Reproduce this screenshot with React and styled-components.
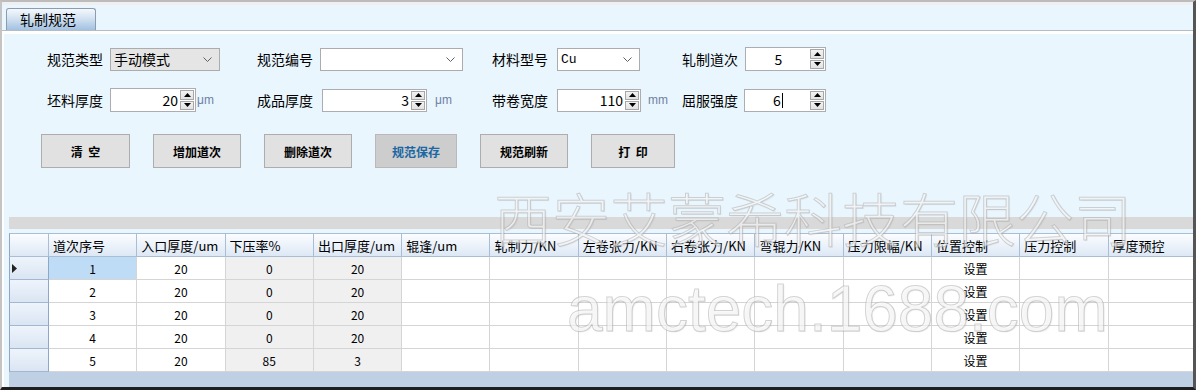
import React from "react";
import styled, { createGlobalStyle } from "styled-components";

const Global = createGlobalStyle`
  html, body { margin: 0; padding: 0; background: #ffffff; }
  body { font-family: "Noto Sans CJK SC", "Noto Sans", sans-serif; }
`;

const Window = styled.div`
  position: relative;
  width: 1196px;
  height: 390px;
  box-sizing: border-box;
  border-top: 2px solid #bcbcbc;
  border-left: 2px solid #c4c4c4;
  border-right: 3px solid #555555;
  border-bottom: 3px solid #1e1e1e;
  background: #eaf6fd;
  display: flex;
  flex-direction: column;
  overflow: hidden;
  font-family: "Noto Sans CJK SC", "Noto Sans", sans-serif;
  color: #000;
`;

const TabStrip = styled.div`
  flex: none;
  height: 29px;
  box-sizing: border-box;
  padding: 6px 0 0 4px;
  background: linear-gradient(#efefef 0 3px, #eaf6fd 3px);
  border-bottom: 1px solid #b5bcc5;
  display: flex;
  align-items: flex-end;
`;

const Tab = styled.div`
  width: 90px;
  height: 22px;
  box-sizing: border-box;
  border: 1px solid #8c9cae;
  border-bottom: none;
  border-radius: 3px 3px 0 0;
  background: linear-gradient(#f4f8fc, #d3e2f1 45%, #a2c1e1);
  font-size: 14px;
  line-height: 20px;
  padding-left: 13px;
`;

const TabPage = styled.div`
  flex: 1;
  display: flex;
  flex-direction: column;
  border-top: 3px solid #ffffff;
  border-left: 2px solid #ffffff;
  background: #eaf6fe;
  min-height: 0;
`;

const FormPanel = styled.div`
  flex: none;
  height: 183px;
  box-sizing: border-box;
  padding: 13px 0 0 37px;
  display: flex;
  flex-direction: column;
`;

const FieldRow = styled.div`
  display: grid;
  grid-template-columns: 210px 235px 190px 200px;
  height: 24px;
  margin-left: 6px;
  margin-top: ${(p) => p.$mt || 0}px;
  align-items: center;
`;

const Field = styled.div`
  display: flex;
  align-items: center;
  height: 100%;
`;

const Label = styled.span`
  font-size: 14px;
  white-space: nowrap;
  margin-right: ${(p) => p.$gap}px;
`;

const Combo = styled.div`
  width: ${(p) => p.$w}px;
  height: 23px;
  box-sizing: border-box;
  border: 1px solid #acacac;
  background: ${(p) => (p.$readonly ? "#e5e5e5" : "#ffffff")};
  display: flex;
  align-items: center;
  justify-content: space-between;
  padding: 0 7px 0 3px;
  font-size: 14px;
`;

const ComboText = styled.span`
  font-family: ${(p) =>
    p.$mono ? '"Liberation Mono", monospace' : '"Noto Sans CJK SC", sans-serif'};
  font-size: ${(p) => (p.$mono ? 13 : 14)}px;
`;

const Spin = styled.div`
  width: ${(p) => p.$w}px;
  height: ${(p) => p.$h || 24}px;
  box-sizing: border-box;
  border: 1px solid #abadb3;
  background: #ffffff;
  display: flex;
  padding: 1px;
`;

const SpinValue = styled.div`
  flex: 1;
  display: flex;
  align-items: center;
  justify-content: ${(p) => (p.$center ? "center" : "flex-end")};
  padding-right: ${(p) => (p.$center ? 0 : 2)}px;
  font-size: 14px;
`;

const Caret = styled.span`
  display: inline-block;
  width: 1px;
  height: 15px;
  background: #000;
  margin-left: 1px;
`;

const SpinButtons = styled.div`
  width: 14px;
  display: flex;
  flex-direction: column;
  gap: 1px;
`;

const SpinBtn = styled.div`
  flex: 1;
  box-sizing: border-box;
  border: 1px solid #a7a7a7;
  background: linear-gradient(#f3f3f3, #e2e2e2);
  display: flex;
  align-items: center;
  justify-content: center;
`;

const Unit = styled.span`
  font-family: "Liberation Sans", Arial, sans-serif;
  font-size: 12px;
  color: #6f80a4;
  margin-left: ${(p) => p.$gap}px;
`;

const ButtonRow = styled.div`
  display: flex;
  gap: 23px;
  margin-top: 22px;
`;

const Button = styled.div`
  width: ${(p) => p.$w}px;
  height: 34px;
  box-sizing: border-box;
  border: 1px solid ${(p) => (p.$active ? "#b9b9b9" : "#adadad")};
  background: ${(p) => (p.$active ? "#cdcdcd" : "#e1e1e1")};
  color: ${(p) => (p.$active ? "#1a67a3" : "#000000")};
  font-size: 12px;
  font-weight: 700;
  display: flex;
  align-items: center;
  justify-content: center;
  white-space: pre;
`;

const GridArea = styled.div`
  flex: 1;
  margin-left: 5px;
  display: flex;
  flex-direction: column;
  min-height: 0;
`;

const Band = styled.div`
  flex: none;
  height: 12px;
  background: #d9d9d9;
  margin-bottom: 4px;
`;

const GridViewport = styled.div`
  flex: 1;
  background: #bfd0e5;
  overflow: hidden;
`;

const Grid = styled.div`
  display: grid;
  grid-template-columns: 40px repeat(13, 88.3px);
  width: max-content;
`;

const HeadCell = styled.div`
  height: 24px;
  box-sizing: border-box;
  border-top: 1px solid #a9bdd5;
  border-bottom: 1px solid #a9bdd5;
  border-right: 1px solid #a9bdd5;
  border-left: ${(p) => (p.$corner ? "1px solid #8ea7c8" : "none")};
  background: linear-gradient(#fbfdff, #dde8f5);
  font-size: 13px;
  padding-left: 4px;
  display: flex;
  align-items: center;
  white-space: nowrap;
  overflow: hidden;
`;

const RowHead = styled.div`
  height: 23px;
  box-sizing: border-box;
  border-left: 1px solid #8ea7c8;
  border-right: 1px solid #8ea7c8;
  border-bottom: 1px solid #a3b7d2;
  background: linear-gradient(#eef4fb, #dae5f3);
  display: flex;
  align-items: center;
  padding-left: 2px;
`;

const Cell = styled.div`
  height: 23px;
  box-sizing: border-box;
  border-right: 1px solid #d5d5d5;
  border-bottom: 1px solid #d5d5d5;
  background: ${(p) => p.$bg};
  font-size: 12px;
  display: flex;
  align-items: center;
  justify-content: center;
`;

const Watermark = styled.div`
  position: absolute;
  left: ${(p) => p.$x}px;
  top: ${(p) => p.$y}px;
  font-family: ${(p) => p.$font};
  font-size: ${(p) => p.$size}px;
  font-weight: ${(p) => p.$weight};
  line-height: 1;
  white-space: nowrap;
  color: rgba(252, 252, 252, 0.6);
  -webkit-text-stroke: 1px rgba(160, 160, 160, 0.45);
  text-shadow: 1px 1px 1px rgba(140, 140, 140, 0.15);
  pointer-events: none;
`;

const Chevron = () => (
  <svg width="9" height="5" viewBox="0 0 9 5">
    <polyline points="0.5,0.5 4.5,4.5 8.5,0.5" fill="none" stroke="#606060" strokeWidth="1" />
  </svg>
);

const Arrow = ({ up }) => (
  <svg width="7" height="4" viewBox="0 0 7 4">
    <polygon points={up ? "3.5,0 7,4 0,4" : "0,0 7,0 3.5,4"} fill="#000" />
  </svg>
);

const RowMarker = () => (
  <svg width="5" height="9" viewBox="0 0 5 9">
    <polygon points="0,0 5,4.5 0,9" fill="#222" />
  </svg>
);

const SpinBox = ({ w, h, value, center, caret }) => (
  <Spin $w={w} $h={h}>
    <SpinValue $center={center}>
      {value}
      {caret && <Caret />}
    </SpinValue>
    <SpinButtons>
      <SpinBtn>
        <Arrow up />
      </SpinBtn>
      <SpinBtn>
        <Arrow />
      </SpinBtn>
    </SpinButtons>
  </Spin>
);

const columns = [
  "道次序号",
  "入口厚度/um",
  "下压率%",
  "出口厚度/um",
  "辊逢/um",
  "轧制力/KN",
  "左卷张力/KN",
  "右卷张力/KN",
  "弯辊力/KN",
  "压力限幅/KN",
  "位置控制",
  "压力控制",
  "厚度预控",
];

const rows = [
  [1, 20, 0, 20],
  [2, 20, 0, 20],
  [3, 20, 0, 20],
  [4, 20, 0, 20],
  [5, 20, 85, 3],
];

const buttons = [
  { t: "清  空", w: 89 },
  { t: "增加道次", w: 88 },
  { t: "删除道次", w: 88 },
  { t: "规范保存", w: 82, active: true },
  { t: "规范刷新", w: 88 },
  { t: "打  印", w: 84 },
];

export default function App() {
  return (
    <>
      <Global />
      <Window>
        <TabStrip>
          <Tab>轧制规范</Tab>
        </TabStrip>
        <TabPage>
          <FormPanel>
            <FieldRow>
              <Field>
                <Label $gap={7}>规范类型</Label>
                <Combo $w={110} $readonly>
                  <ComboText>手动模式</ComboText>
                  <Chevron />
                </Combo>
              </Field>
              <Field>
                <Label $gap={7}>规范编号</Label>
                <Combo $w={143}>
                  <ComboText />
                  <Chevron />
                </Combo>
              </Field>
              <Field>
                <Label $gap={9}>材料型号</Label>
                <Combo $w={83}>
                  <ComboText $mono>Cu</ComboText>
                  <Chevron />
                </Combo>
              </Field>
              <Field>
                <Label $gap={7}>轧制道次</Label>
                <SpinBox w={81} value="5" center />
              </Field>
            </FieldRow>
            <FieldRow $mt={17}>
              <Field>
                <Label $gap={7}>坯料厚度</Label>
                <SpinBox w={86} value="20" />
                <Unit $gap={1}>μm</Unit>
              </Field>
              <Field>
                <Label $gap={9}>成品厚度</Label>
                <SpinBox w={105} h={23} value="3" />
                <Unit $gap={8}>μm</Unit>
              </Field>
              <Field>
                <Label $gap={9}>带卷宽度</Label>
                <SpinBox w={84} h={23} value="110" />
                <Unit $gap={7}>mm</Unit>
              </Field>
              <Field>
                <Label $gap={6}>屈服强度</Label>
                <SpinBox w={82} h={23} value="6" center caret />
              </Field>
            </FieldRow>
            <ButtonRow>
              {buttons.map((b) => (
                <Button key={b.t} $w={b.w} $active={b.active}>
                  {b.t}
                </Button>
              ))}
            </ButtonRow>
          </FormPanel>
          <GridArea>
            <Band />
            <GridViewport>
              <Grid>
                <HeadCell $corner />
                {columns.map((c) => (
                  <HeadCell key={c}>{c}</HeadCell>
                ))}
                {rows.map((r, ri) => (
                  <React.Fragment key={ri}>
                    <RowHead>{ri === 0 && <RowMarker />}</RowHead>
                    {columns.map((c, ci) => {
                      let bg = "#ffffff";
                      if (ci === 2 || ci === 3) bg = "#f0f0f0";
                      if (ri === 0 && ci === 0) bg = "#bfdcf7";
                      let txt = "";
                      if (ci < 4) txt = r[ci];
                      if (ci === 10) txt = "设置";
                      return (
                        <Cell key={c} $bg={bg}>
                          {txt}
                        </Cell>
                      );
                    })}
                  </React.Fragment>
                ))}
              </Grid>
            </GridViewport>
          </GridArea>
        </TabPage>
        <Watermark
          $x={492}
          $y={186}
          $size={58}
          $weight={300}
          $font='"Noto Sans CJK SC", sans-serif'
        >
          西安艾蒙希科技有限公司
        </Watermark>
        <Watermark
          $x={565}
          $y={275}
          $size={64}
          $weight={400}
          $font='"Liberation Sans", Arial, sans-serif'
        >
          amctech.1688.com
        </Watermark>
      </Window>
    </>
  );
}
